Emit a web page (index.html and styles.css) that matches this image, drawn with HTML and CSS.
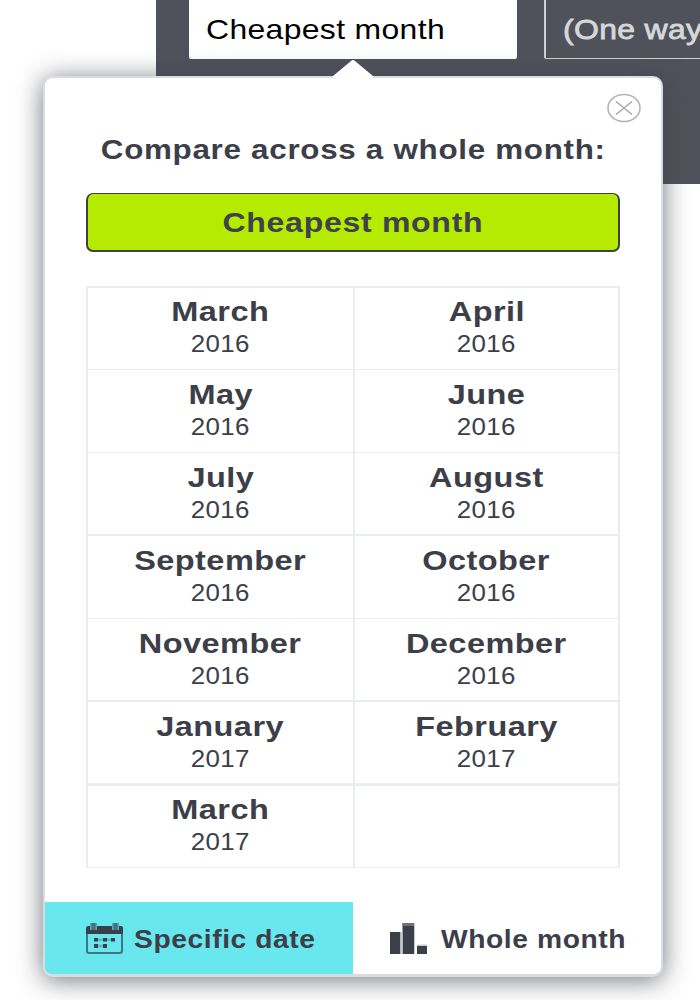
FILE: index.html
```html
<!DOCTYPE html>
<html lang="en">
<head>
<meta charset="utf-8">
<title>Cheapest month</title>
<link rel="stylesheet" href="styles.css">
</head>
<body>
<header class="search-bar">
  <div class="field"><span class="t field-text">Cheapest month</span></div>
  <div class="field field-disabled"><span class="t return-text">(One way</span></div>
</header>
<section class="popover">
  <svg class="arrow" width="44" height="18" viewBox="0 0 44 18"><path d="M2 18V16L20 1Q22-1 24 1L42 16V18Z" fill="#fff"/></svg>
  <button class="close" aria-label="Close"><svg width="36" height="30" viewBox="0 0 36 30" fill="none"><ellipse cx="18" cy="15" rx="16" ry="13.5" stroke="#b4b5b9" stroke-width="1.6"/><path d="M10 8.5L26 21.5M26 8.5L10 21.5" stroke="#a5a6aa" stroke-width="1.5"/></svg></button>
  <h1 class="title"><span class="t title-text">Compare across a whole month:</span></h1>
  <button class="cheapest"><span class="t cheapest-text">Cheapest month</span></button>
  <div class="months">
    <div class="month"><b class="t">March</b><span class="t">2016</span></div>
    <div class="month"><b class="t">April</b><span class="t">2016</span></div>
    <div class="month"><b class="t">May</b><span class="t">2016</span></div>
    <div class="month"><b class="t">June</b><span class="t">2016</span></div>
    <div class="month"><b class="t">July</b><span class="t">2016</span></div>
    <div class="month"><b class="t">August</b><span class="t">2016</span></div>
    <div class="month"><b class="t">September</b><span class="t">2016</span></div>
    <div class="month"><b class="t">October</b><span class="t">2016</span></div>
    <div class="month"><b class="t">November</b><span class="t">2016</span></div>
    <div class="month"><b class="t">December</b><span class="t">2016</span></div>
    <div class="month"><b class="t">January</b><span class="t">2017</span></div>
    <div class="month"><b class="t">February</b><span class="t">2017</span></div>
    <div class="month"><b class="t">March</b><span class="t">2017</span></div>
    <div class="month"></div>
  </div>
  <nav class="tabs">
    <div class="tab tab-date">
      <svg width="37" height="31" viewBox="0 0 37 31"><path d="M1 10V28Q1 30 3 30H34Q36 30 36 28V10" fill="none" stroke="#3f7681" stroke-width="2"/><path d="M0 11V5Q0 3 2 3H35Q37 3 37 5V11Z" fill="#3b3f49"/><path d="M4 0H11V7H4ZM26 0H33V7H26Z" fill="#55a9b4"/><path d="M5.500 0H9.500V7H5.500ZM27.500 0H31.500V7H27.500Z" fill="#47717a"/><path d="M8 15H12V18.500H8ZM17 15H21V18.500H17ZM25 15H29V18.500H25ZM8 21H12V25H8ZM17 21H21V25H17Z" fill="#3b3f49"/><path d="M12 15.500H17V18H12ZM21 15.500H25V18H21ZM12 21.500H17V24.500H12Z" fill="#5bbcc7"/></svg>
      <span class="t tab-text">Specific date</span>
    </div>
    <div class="tab tab-month">
      <svg width="37" height="31" viewBox="0 0 37 31"><path d="M0 9H10.500V31H0ZM12.500 0H24V31H12.500ZM27 23H37V31H27Z" fill="#3b3f49"/><path d="M12.500 0H24V3H12.500Z" fill="#707278"/><path d="M10.500 9H12.500V31H10.500ZM24 0H25V31H24ZM27 21.500H37V23H27Z" fill="#c8c9cc"/></svg>
      <span class="t tab-text">Whole month</span>
    </div>
  </nav>
</section>
</body>
</html>
```
FILE: styles.css
```css
* { box-sizing: border-box; }
body {
  margin: 0;
  width: 700px;
  height: 1000px;
  overflow: hidden;
  position: relative;
  background: #fff;
  color: #3c3e48;
  font-family: "Liberation Sans", Arial, sans-serif;
}
button { font: inherit; color: inherit; padding: 0; margin: 0; }

/* Wide lettering */
.t { display: block; width: max-content; white-space: nowrap; letter-spacing: .4px; transform: scaleX(1.16); }

.search-bar {
  margin-left: 156px;
  height: 184px;
  padding-left: 33px;
  display: flex;
  gap: 27px;
  overflow: hidden;
  background: #50525b;
}
.field {
  flex: none;
  width: 328px;
  height: 59px;
  padding: 13px 0 0 17px;
  border-radius: 0 0 2px 2px;
  background: #fff;
  color: #000;
  font-size: 28px;
  line-height: 34px;
}
.field-disabled { border: 1px solid #d0d1d4; border-width: 0 1px 1px 2px; background: none; color: #d6d7da; }
.field-text { letter-spacing: .3px; transform: scaleX(1.14); transform-origin: left; }
.return-text { -webkit-text-stroke: .8px; letter-spacing: .3px; transform: scaleX(1.14); transform-origin: left; }

.popover {
  position: absolute;
  left: 43px;
  top: 76px;
  width: 620px;
  height: 901px;
  padding-top: 54px;
  display: flex;
  flex-direction: column;
  align-items: center;
  border: 2px solid #dadce1;
  border-bottom-width: 3px;
  border-radius: 10px;
  background: #fff;
  box-shadow: 0 3px 26px rgba(60, 62, 72, .72);
}
.arrow { position: absolute; left: 286px; top: -18px; }
.close { position: absolute; right: 19px; top: 15px; width: 36px; height: 30px; border: 0; background: none; }
.close svg { display: block; }
.title { margin: 0; height: 61px; font-size: 27px; line-height: 37px; }
.title-text { letter-spacing: .6px; transform: scaleX(1.162); }
.cheapest {
  flex: none;
  width: 534px;
  height: 59px;
  padding-top: 1px;
  display: flex;
  justify-content: center;
  align-items: center;
  border: 2px solid #3c423c;
  border-top-width: 1px;
  border-radius: 7px;
  background: #b4eb00;
  color: #3e424a;
  font-size: 28px;
  font-weight: bold;
}
.cheapest-text { letter-spacing: .6px; transform: scaleX(1.145); }
.months {
  flex: none;
  width: 534px;
  height: 582px;
  margin-top: 34px;
  display: grid;
  grid-template-columns: 267px 263px;
  grid-template-rows: 82px 83px 83px 83px 83px 84px 81px;
  border: 2px solid #eaeded;
  border-bottom-width: 1px;
}
.month { display: flex; flex-direction: column; align-items: center; padding-top: 8px; border-bottom: 1px solid #eaeded; }
.month:nth-child(-n+2) { padding-top: 7px; }
.month:nth-child(odd) { border-right: 2px solid #eaeded; }
.month:nth-child(n+13) { border-bottom: 0; padding-top: 7px; }
.month:nth-child(5), .month:nth-child(6), .month:nth-child(9), .month:nth-child(10) { border-bottom-width: 2px; }
.month:nth-child(11), .month:nth-child(12) { border-bottom-width: 3px; }
.month b { font-size: 28px; line-height: 34px; }
.month span { font-size: 24px; line-height: 30px; letter-spacing: .3px; transform: scaleX(1.08); }

.tabs { align-self: stretch; margin-top: auto; height: 72px; display: flex; overflow: hidden; border-radius: 0 0 7px 7px; }
.tab { display: flex; align-items: center; gap: 11px; padding-top: 1px; }
.tab svg { flex: none; }
.tab-date { width: 308px; padding-left: 41px; background: #68e7ef; }
.tab-month { padding-left: 37px; gap: 14px; }
.tab-text { font-size: 25px; line-height: 32px; font-weight: bold; letter-spacing: .5px; transform: scaleX(1.13); transform-origin: left; }
```
